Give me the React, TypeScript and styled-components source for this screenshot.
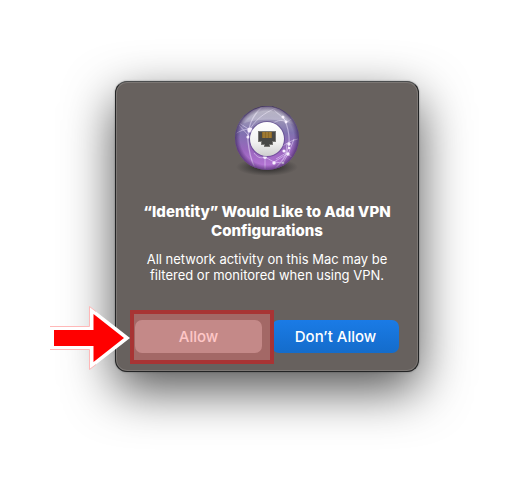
import React from 'react';
import styled, { createGlobalStyle, css } from 'styled-components';

const GlobalStyle = createGlobalStyle`
  *, *::before, *::after { box-sizing: border-box; }
  body {
    margin: 0;
    background: #fff;
    font-family: Inter, "Liberation Sans", sans-serif;
  }
`;

const Page = styled.main`
  display: flex;
  justify-content: center;
  align-items: flex-start;
  min-height: 100vh;
  padding: 81px 16px 48px 18px;
`;

const Dialog = styled.section`
  display: flex;
  flex-direction: column;
  align-items: center;
  width: 100%;
  max-width: 304px;
  padding: 22px 18px 18px;
  border: 1px solid #232425;
  border-top-color: #4b4d4e;
  border-radius: 12px;
  background: #67615e;
  color: #fff;
  text-align: center;
  box-shadow:
    inset 0 0 0 1px #7c7774,
    0 0 2px rgba(0, 0, 0, 0.35),
    0 18px 50px rgba(0, 0, 0, 0.68);
`;

const Title = styled.h1`
  margin: 22px 0 0;
  font-size: 15px;
  font-weight: 800;
  line-height: 19px;
`;

const Message = styled.p`
  margin: 11px 0 0;
  font-size: 13px;
  font-weight: 400;
  line-height: 16px;
`;

const Actions = styled.div`
  display: grid;
  grid-template-columns: 1fr 1fr;
  gap: 10px;
  width: 100%;
  margin-top: 37px;
  padding: 0 1px;
`;

const ActionSlot = styled.div`
  position: relative;
  display: flex;
`;

const ActionButton = styled.button<{ $primary?: boolean }>`
  flex: 1;
  height: 33px;
  padding: 0;
  border: 0;
  border-radius: 7px;
  background: #9d9896;
  color: #fff;
  font: 500 15px/32px Inter, "Liberation Sans", sans-serif;
  ${(p) =>
    p.$primary &&
    css`
      background: linear-gradient(#1a7be6, #146ccb);
    `}
`;

const Highlight = styled.div`
  position: absolute;
  z-index: 1;
  inset: -10px -12px -11px -5px;
  border: 4px solid rgba(171, 50, 50, 0.96);
  background: rgba(255, 115, 115, 0.4);
  background-clip: padding-box;
  pointer-events: none;
`;

const Pointer = styled.svg`
  position: absolute;
  z-index: 2;
  top: -15px;
  right: 100%;
  margin-right: 4px;
  pointer-events: none;
`;

const NetworkIcon = () => (
  <svg width="76" height="76" viewBox="0 0 76 76" aria-hidden="true">
    <defs>
      <linearGradient id="globe" x1="0" y1="0" x2="0" y2="1">
        <stop offset="0" stopColor="#514a70" />
        <stop offset="0.2" stopColor="#9c96b6" />
        <stop offset="0.42" stopColor="#8072b0" />
        <stop offset="0.7" stopColor="#9a66be" />
        <stop offset="1" stopColor="#bb78da" />
      </linearGradient>
      <radialGradient id="rim">
        <stop offset="0.84" stopColor="#2d174d" stopOpacity="0" />
        <stop offset="1" stopColor="#2d174d" stopOpacity="0.6" />
      </radialGradient>
      <linearGradient id="gloss" x1="0" y1="0" x2="0" y2="1">
        <stop offset="0" stopColor="#fff" stopOpacity="0.65" />
        <stop offset="1" stopColor="#fff" stopOpacity="0.08" />
      </linearGradient>
      <linearGradient id="disc" x1="0" y1="0" x2="0" y2="1">
        <stop offset="0" stopColor="#fff" />
        <stop offset="0.6" stopColor="#f1f1f1" />
        <stop offset="1" stopColor="#cfcfcf" />
      </linearGradient>
      <radialGradient id="ground">
        <stop offset="0" stopColor="#111" stopOpacity="0.9" />
        <stop offset="1" stopColor="#222" stopOpacity="0" />
      </radialGradient>
      <clipPath id="ball">
        <circle cx="38" cy="34" r="31" />
      </clipPath>
    </defs>
    <ellipse cx="38" cy="63" rx="31" ry="9" fill="url(#ground)" />
    <circle cx="38" cy="34" r="32" fill="url(#globe)" />
    <g clipPath="url(#ball)" fill="none" stroke="#efe6ff" strokeOpacity="0.5">
      <path d="M34 2C22 12 18 26 19 37s4 22 8 29" strokeWidth="1.3" />
      <path d="M7 17l14 9M6 30c5-3 9-5 15-5M9 20l11 12" />
      <path d="M21 25C29 12 40 7 49 3" />
      <path d="M54 13c6 10 8 25 4 35s-9 13-13 18" strokeWidth="1.2" />
      <path d="M45 6l9 8 4 4 7-5M42 20c6-3 9-5 16-2" />
      <path d="M69 35c-10 2-16 8-23 12M58 39l-1 10-10 6" />
      <path d="M36 53l9 5 13-8 8 5M36 53v14M25 49c3 4 6 6 11 4" />
      <path d="M45 58l9 1 6-11 5-13" />
    </g>
    <g fill="#f8efff">
      <circle cx="21" cy="26" r="2.6" />
      <circle cx="19" cy="33" r="1.6" />
      <circle cx="54" cy="13" r="1.5" />
      <circle cx="57" cy="18" r="1.4" />
      <circle cx="60" cy="40" r="1.7" />
      <circle cx="55" cy="47" r="1.6" />
      <circle cx="59" cy="50" r="1.7" />
      <circle cx="60" cy="44" r="1.2" />
      <circle cx="36" cy="53" r="1.9" />
      <circle cx="45" cy="59" r="1.7" />
      <circle cx="54" cy="59" r="1.3" />
    </g>
    <path d="M11 21a29 29 0 0 1 54 0C52 14 24 14 11 21Z" fill="url(#gloss)" />
    <circle cx="38" cy="34" r="32" fill="url(#rim)" />
    <circle cx="38" cy="35" r="18" fill="#503980" opacity="0.55" />
    <circle cx="38" cy="35" r="17" fill="url(#disc)" />
    <path d="M29 27h18v11h-3v3h-3v2h-6v-2h-3v-3h-3Z" fill="#777673" />
    <path d="M30 28h16v9h-3v3h-3v2h-4v-2h-3v-3h-3Z" fill="#484847" />
    <path d="M33 28h10v6H33Z" fill="#8c692a" />
    <path d="M35 28v6M38 28v6M41 28v6" stroke="#b18a3d" />
  </svg>
);

const ArrowPointer = () => (
  <Pointer width="81" height="66" viewBox="0 0 81 66" aria-hidden="true">
    <path d="M0 21.5h39.5V1.5L80 33 39.5 64.5V44.5H0" fill="#fff" />
    <path d="M0 21.5h39.5V1.5L46 6.5M0 44.5h39.5v20L46 59.5" fill="none" stroke="#ffb8b8" />
    <path d="M4 25h39.500V9L74 33 43.5 57V41H4Z" fill="#f00" />
  </Pointer>
);

export default function App() {
  return (
    <>
      <GlobalStyle />
      <Page>
        <Dialog role="alertdialog" aria-labelledby="dialog-title" aria-describedby="dialog-message">
          <NetworkIcon />
          <Title id="dialog-title">“Identity” Would Like to Add VPN Configurations</Title>
          <Message id="dialog-message">
            All network activity on this Mac may be filtered or monitored when using VPN.
          </Message>
          <Actions>
            <ActionSlot>
              <ActionButton type="button">Allow</ActionButton>
              <Highlight />
              <ArrowPointer />
            </ActionSlot>
            <ActionSlot>
              <ActionButton type="button" $primary>Don’t Allow</ActionButton>
            </ActionSlot>
          </Actions>
        </Dialog>
      </Page>
    </>
  );
}
